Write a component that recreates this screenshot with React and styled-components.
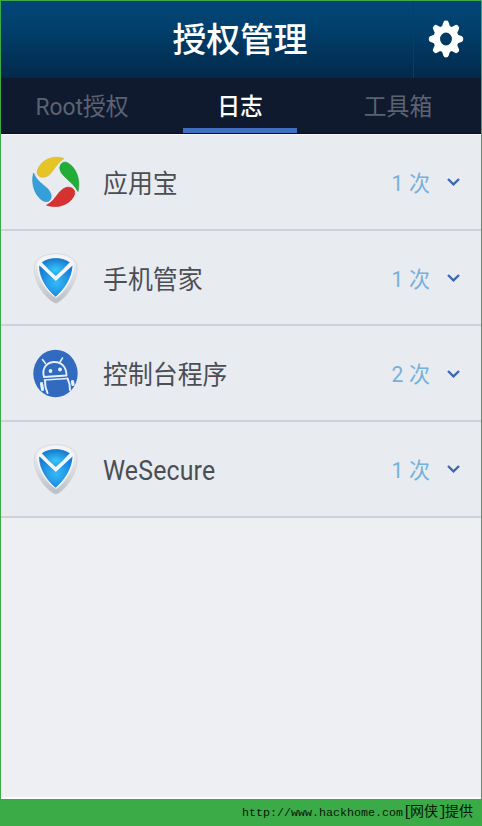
import React from "react";
import styled, { createGlobalStyle } from "styled-components";

const GlobalStyle = createGlobalStyle`
  * { box-sizing: border-box; }
  body { margin: 0; background: #3aab46; }
`;

const Page = styled.div`
  width: 482px;
  height: 826px;
  padding: 1px 1px 0;
  display: flex;
  flex-direction: column;
  background: #3aab46;
  font-family: Roboto, "Noto Sans CJK SC", sans-serif;
  overflow: hidden;
`;

const Screen = styled.main`
  height: 798px;
  flex: none;
  display: flex;
  flex-direction: column;
  background: #eeeff3;
  border-bottom: 2px solid #fdfdfd;
`;

const Header = styled.header`
  height: 77px;
  flex: none;
  display: grid;
  grid-template-columns: 66px 1fr 68px;
  grid-template-rows: 77px;
  background: linear-gradient(#014678 0%, #01406d 35%, #02294a 100%);
`;

const Title = styled.h1`
  grid-column: 2;
  margin: 0;
  text-align: center;
  font-size: 33.8px;
  font-weight: 500;
  line-height: 80px;
  color: #fff;
`;

const SettingsButton = styled.button`
  padding: 0 4px 2px 0;
  border: 0;
  border-left: 1px solid #053f69;
  background: none;
  display: flex;
  align-items: center;
  justify-content: center;
`;

const Tabs = styled.nav`
  height: 56px;
  flex: none;
  display: grid;
  grid-template-columns: repeat(3, 158px);
  padding-left: 2px;
  background: #0f1a2f;
  border-bottom: 1px solid #07101f;
`;

const Tab = styled.div`
  display: flex;
  flex-direction: column;
  align-items: center;
  justify-content: space-between;
  font-size: 22.8px;
  font-weight: ${(p) => (p.$active ? 500 : 400)};
  line-height: 59px;
  white-space: nowrap;
  color: ${(p) => (p.$active ? "#fff" : "#5b6372")};
`;

const TabLabel = styled.span`
  height: 50px;
  transform: scaleY(1.06);
  transform-origin: 50% 29px;
`;

const Indicator = styled.div`
  width: 114px;
  height: 5px;
  background: ${(p) => (p.$active ? "#3e6fc0" : "transparent")};
`;

const List = styled.ul`
  margin: 0;
  padding: 1px 0 0;
  list-style: none;
  background: #f8f9fb;
`;

const Row = styled.li`
  height: 95.7px;
  display: flex;
  align-items: center;
  padding: 0 21px 0 30px;
  background: #e8ebf0;
  border-bottom: 2px solid #ced1d7;
`;

const IconSlot = styled.div`
  width: 50px;
  height: 54px;
  margin-right: 22px;
  flex: none;
`;

const Name = styled.span`
  flex: 1;
  font-size: 24.9px;
  line-height: 36px;
  letter-spacing: ${(p) => (p.$latin ? "0.15px" : "0")};
  padding-top: ${(p) => (p.$latin ? 5 : 6)}px;
  transform: scaleY(${(p) => (p.$latin ? 1.1 : 1.03)});
  color: #4b4e53;
`;

const Count = styled.span`
  font-size: 21px;
  line-height: 30px;
  padding-top: 4px;
  word-spacing: 0.5px;
  transform: scaleY(1.05);
  color: #76b1dc;
  margin-right: 17px;
`;

const Footer = styled.footer`
  flex: 1;
  padding: 1px 8px 0 0;
  border-top: 1px solid #5c9364;
  text-align: right;
  white-space: nowrap;
  font-family: "Liberation Mono", "Noto Sans CJK SC", monospace;
  font-size: 11.67px;
  line-height: 23px;
  color: #071609;
`;

const FooterHan = styled.span`
  font-size: 14px;
`;

const Bracket = styled.span`
  font-size: 15px;
  letter-spacing: -2px;
`;

function Gear() {
  return (
    <svg width="36" height="38" viewBox="-18 -19 36 38">
      <g fill="#fff" transform="scale(.96 1.03)">
        {[0, 45, 90, 135, 180, 225, 270, 315].map((angle) => (
          <path key={angle} transform={`rotate(${angle})`} d="M-4.600-11 L-2.600-16.600 Q-2.200-18 0-18 Q2.200-18 2.600-16.600 L4.600-11Z" />
        ))}
        <path fillRule="evenodd" d="M0-13.200A13.200 13.200 0 1 1 0 13.200A13.200 13.200 0 1 1 0-13.200M0-6.200A6.200 6.200 0 1 0 0 6.200A6.200 6.200 0 1 0 0-6.200" />
      </g>
    </svg>
  );
}

function PinwheelIcon() {
  return (
    <svg width="50" height="54" viewBox="0 0 50 54">
      <path fill="#e5c426" stroke="#d5b532" strokeWidth=".6" d="M33 3.500C22-.3 10 4.500 6.300 15.500C5 21 10 23.500 15.500 21.500C22 19 23.500 9.500 33 3.500Z" />
      <path fill="#21ad36" stroke="#149429" strokeWidth=".6" d="M47 36.500C50 24 44.500 11.500 36 7.500C31.500 6 28.200 9.500 29 14.500C30.500 22 41 25.500 47 36.500Z" />
      <path fill="#d63232" stroke="#bd2426" strokeWidth=".6" d="M15.500 50.200C26.500 54 39.500 50 43.600 39.500C44.800 34 40 31.200 35 32.500C26.500 35.500 25.500 45 15.500 50.200Z" />
      <path fill="#369ed8" stroke="#358bbd" strokeWidth=".6" d="M2.500 18C-.7 30.500 5.500 43 13 46.200C18 48 21 44.500 20 39.500C17.500 30.500 7.500 30 2.500 18Z" />
    </svg>
  );
}

function ShieldIcon({ id }) {
  return (
    <svg width="50" height="54" viewBox="0.500 0.500 50 54">
      <defs>
        <linearGradient id={`${id}-rim`} x1="0" y1="0" x2="0" y2="1">
          <stop offset="0" stopColor="#f4f5f6" />
          <stop offset=".55" stopColor="#d8dadd" />
          <stop offset="1" stopColor="#bbbdc0" />
        </linearGradient>
        <radialGradient id={`${id}-top`} cx=".5" cy=".65" r=".65">
          <stop offset="0" stopColor="#39c8fb" />
          <stop offset="1" stopColor="#1678cf" />
        </radialGradient>
        <radialGradient id={`${id}-base`} cx=".5" cy=".55" r=".6">
          <stop offset="0" stopColor="#35baf8" />
          <stop offset="1" stopColor="#147bd8" />
        </radialGradient>
      </defs>
      <path fill={`url(#${id}-rim)`} stroke="#d1d3d7" strokeWidth=".8" d="M25 3.200C32 3 39 5 43.500 9.300Q47 12.500 46.600 19C46 33 36 47 27.500 52Q25.500 53.300 23.500 52C14 47 4 33 3.700 18Q3.500 12.500 7 9C12 5 18 3.300 25 3.200Z" />
      <path fill="#f3f5f7" d="M25 5C33 5 38.500 7.500 43 12C45 27 34 42 25.500 47.500C17 42 5 28 7 12C12 7 18 5 25 5Z" />
      <path fill={`url(#${id}-top)`} d="M11.500 12C19 6.800 31 6.500 39 12Q32.300 19.500 25.300 25.500Q18 19.500 11.500 12Z" />
      <path fill={`url(#${id}-base)`} d="M9 15L25.300 30.500L42 15C41.500 28 33 39.500 25.500 46C17.500 40 8.500 27 9 15Z" />
      <path fill="none" stroke="#1674c8" strokeWidth=".7" d="M11.500 12C19 6.800 31 6.500 39 12M9 15.500C8.500 27 17.500 40 25.500 46" />
    </svg>
  );
}

function AndroidIcon() {
  return (
    <svg width="50" height="54" viewBox="0 0 50 54">
      <ellipse cx="24.500" cy="27.500" rx="22.200" ry="23.800" fill="#326abf" />
      <g fill="none" stroke="#e4f1fd" strokeLinecap="round" strokeLinejoin="round">
        <path strokeWidth="1.500" d="M14.500 17.500L11.500 13.500M29 16L31.500 12" />
        <path strokeWidth="1.900" d="M13 31C10.500 22.500 15.500 16.500 22.500 16C30.500 15.500 35.500 21 35.500 29.500Z" />
        <path strokeWidth="1.700" d="M13.500 34L36.500 32.500" />
        <path strokeWidth="2" d="M14 34.500L14.500 41L16.500 47M36.500 32.500L38.500 38L39 44" />
        <path strokeWidth="3.200" d="M10.500 37.500L11.500 43.500M41.500 35.500L42 38.500" />
      </g>
      <g fill="#e4f1fd">
        <circle cx="19.500" cy="25" r="1.900" />
        <circle cx="29" cy="23.500" r="1.900" />
      </g>
    </svg>
  );
}

function Chevron() {
  return (
    <svg width="13" height="9" viewBox="0 0 13 9">
      <path d="M1 2L6.500 7.400L12 2" fill="none" stroke="#3e66ad" strokeWidth="2.300" />
    </svg>
  );
}

const entries = [
  { name: "应用宝", count: 1, icon: <PinwheelIcon /> },
  { name: "手机管家", count: 1, icon: <ShieldIcon id="manager" /> },
  { name: "控制台程序", count: 2, icon: <AndroidIcon /> },
  { name: "WeSecure", count: 1, icon: <ShieldIcon id="secure" />, latin: true },
];

export default function App() {
  return (
    <Page>
      <GlobalStyle />
      <Screen>
        <Header>
          <Title>授权管理</Title>
          <SettingsButton aria-label="设置"><Gear /></SettingsButton>
        </Header>
        <Tabs>
          <Tab><TabLabel>Root授权</TabLabel><Indicator /></Tab>
          <Tab $active><TabLabel>日志</TabLabel><Indicator $active /></Tab>
          <Tab><TabLabel>工具箱</TabLabel><Indicator /></Tab>
        </Tabs>
        <List>
          {entries.map((entry) => (
            <Row key={entry.name}>
              <IconSlot>{entry.icon}</IconSlot>
              <Name $latin={entry.latin}>{entry.name}</Name>
              <Count>{entry.count} 次</Count>
              <Chevron />
            </Row>
          ))}
        </List>
      </Screen>
      <Footer>
        http://www.hackhome.com<Bracket>[</Bracket><FooterHan>网侠</FooterHan><Bracket>]</Bracket><FooterHan>提供</FooterHan>
      </Footer>
    </Page>
  );
}
